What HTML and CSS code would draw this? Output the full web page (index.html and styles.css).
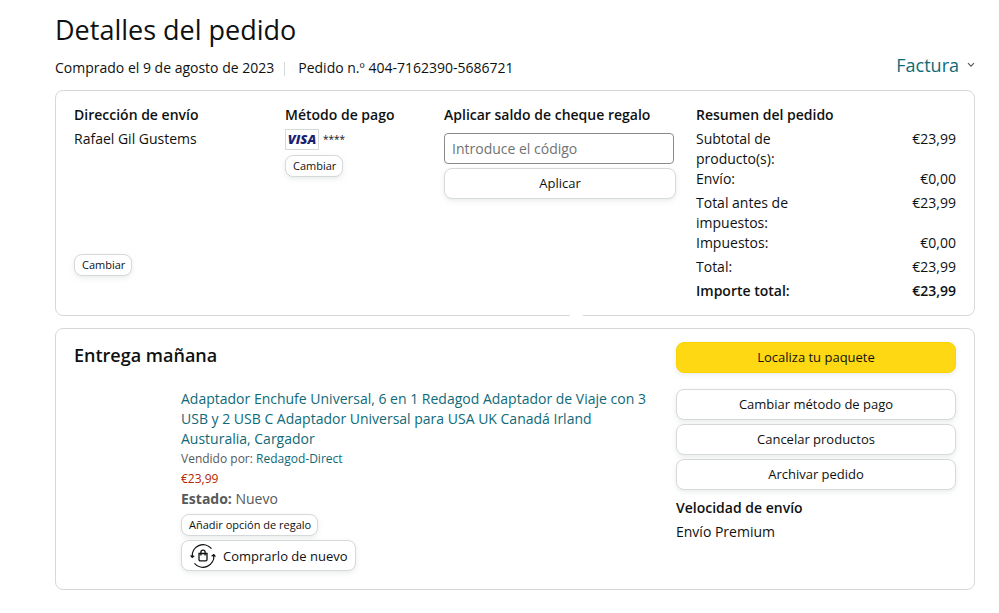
FILE: index.html
```
<!DOCTYPE html>
<html lang="es">
<head>
  <meta charset="UTF-8">
  <meta name="viewport" content="width=device-width, initial-scale=1">
  <title>Detalles del pedido</title>
  <link rel="stylesheet" href="styles.css">
</head>
<body>

<main class="page">
  <h1>Detalles del pedido</h1>
  <div class="order-info">
    <p class="order-meta">
      <span class="order-date">Comprado el 9 de agosto de 2023</span>
      <span class="order-number">Pedido n.º 404-7162390-5686721</span>
    </p>
    <a class="invoice" href="#">Factura
      <svg class="chevron" viewBox="0 0 8 6"><path d="M1 1.2l3 3 3-3" fill="none" stroke="#565959" stroke-width="1.2"/></svg>
    </a>
  </div>

  <!-- Resumen -->
  <section class="card summary">
    <div class="address">
      <h2>Dirección de envío</h2>
      <p>Rafael Gil Gustems</p>
      <button class="btn btn-small" type="button">Cambiar</button>
    </div>

    <div class="payment">
      <h2>Método de pago</h2>
      <p class="payment-card"><span class="visa">VISA</span> <span class="card-digits">****</span></p>
      <button class="btn btn-small" type="button">Cambiar</button>
    </div>

    <form class="gift">
      <h2><label for="code">Aplicar saldo de cheque regalo</label></h2>
      <input class="gift-input" id="code" type="text" placeholder="Introduce el código">
      <button class="btn" type="button">Aplicar</button>
    </form>

    <div class="totals">
      <h2>Resumen del pedido</h2>
      <table>
        <tr><th scope="row">Subtotal de producto(s):</th><td>€23,99</td></tr>
        <tr class="spaced"><th scope="row">Envío:</th><td>€0,00</td></tr>
        <tr><th scope="row">Total antes de impuestos:</th><td>€23,99</td></tr>
        <tr class="spaced"><th scope="row">Impuestos:</th><td>€0,00</td></tr>
        <tr class="spaced"><th scope="row">Total:</th><td>€23,99</td></tr>
        <tr class="grand-total"><th scope="row">Importe total:</th><td>€23,99</td></tr>
      </table>
    </div>
  </section>

  <!-- Envío -->
  <section class="card shipment">
    <div class="delivery">
      <h2 class="delivery-title">Entrega mañana</h2>
      <div class="product">
        <a class="product-title" href="#">Adaptador Enchufe Universal, 6 en 1 Redagod Adaptador de Viaje con 3 USB y 2 USB C Adaptador Universal para USA UK Canadá Irland Austuralia, Cargador</a>
        <p class="seller">Vendido por: <a href="#">Redagod-Direct</a></p>
        <p class="price">€23,99</p>
        <p class="condition"><b>Estado:</b> Nuevo</p>
        <button class="btn btn-small" type="button">Añadir opción de regalo</button>
        <button class="btn btn-again" type="button">
          <svg class="again-icon" viewBox="0 0 26 26" fill="none" stroke="#0f1111" stroke-width="1.3">
            <path d="M2.2 14A11 11 0 0 1 21.5 5.6"/>
            <path d="M23.8 12A11 11 0 0 1 4.5 20.4"/>
            <path d="M.6 12.4l1.6 2 2-1.6M21.6 13.2l2.200-1.600 1.600 2"/>
            <path d="M9 10.500h8v6a1.300 1.300 0 0 1-1.300 1.300h-5.400A1.300 1.300 0 0 1 9 16.500zM10.900 12.500V9.200a2.100 2.100 0 0 1 4.200 0v3.300"/>
          </svg>
          Comprarlo de nuevo
        </button>
      </div>
    </div>

    <div class="actions">
      <button class="btn btn-primary" type="button">Localiza tu paquete</button>
      <button class="btn" type="button">Cambiar método de pago</button>
      <button class="btn" type="button">Cancelar productos</button>
      <button class="btn" type="button">Archivar pedido</button>
      <h2 class="speed-title">Velocidad de envío</h2>
      <p>Envío Premium</p>
    </div>
  </section>
</main>

</body>
</html>
```
FILE: styles.css
```
* {
  box-sizing: border-box;
}
body {
  margin: 0;
  font-family: "Open Sans", "Noto Sans", sans-serif;
  font-size: 14px;
  line-height: 20px;
  color: #0f1111;
  background: #fff;
}
.page {
  padding: 12px 24px 24px 55px;
}
h1, h2, p {
  margin: 0;
}
h1 {
  font-size: 27px;
  font-weight: 400;
  line-height: 36px;
}
h2 {
  font-size: 14px;
  font-weight: 600;
  line-height: 20px;
  margin-bottom: 4px;
}
a {
  color: #0f6a78;
  text-decoration: none;
}
a:hover {
  text-decoration: underline;
}
.order-info {
  display: flex;
  justify-content: space-between;
  align-items: flex-start;
  margin-bottom: 12px;
}
.order-meta {
  display: flex;
  padding-top: 10px;
}
.order-date {
  padding-right: 10px;
}
.order-number {
  position: relative;
  padding-left: 14px;
}
.order-number::before {
  content: "";
  position: absolute;
  left: 0;
  top: 4px;
  height: 14px;
  border-left: 1px solid #d5d9d9;
}
.invoice {
  display: flex;
  align-items: center;
  gap: 8px;
  padding-top: 4px;
  font-size: 18px;
  line-height: 26px;
}
.chevron {
  width: 8px;
  height: 6px;
}
.card {
  border: 1px solid #d5d9d9;
  border-radius: 8px;
  padding: 14px 18px;
}
.card + .card {
  margin-top: 12px;
}

/* Controls */
.btn {
  height: 31px;
  padding: 0 10px 2px;
  border: 1px solid #d5d9d9;
  border-radius: 8px;
  background: #fff;
  box-shadow: 0 2px 5px rgba(213, 217, 217, 0.5);
  font-family: inherit;
  font-size: 13px;
  color: #0f1111;
  text-align: center;
  cursor: pointer;
}
.btn:hover {
  background: #f7fafa;
}
.btn-small {
  height: 22px;
  padding: 0 6px 1px 7px;
  font-size: 11px;
}
.btn-primary {
  border-color: #fcd200;
  background: #ffd814;
}
.btn-primary:hover {
  background: #f7ca00;
}

/* Order summary */
.summary {
  position: relative;
  display: grid;
  grid-template-columns: 211fr 159fr 252fr 260fr;
}
/* break in the bottom border */
.summary::after {
  content: "";
  position: absolute;
  left: 56%;
  bottom: -1px;
  width: 13px;
  height: 1px;
  background: #fff;
}
.address {
  display: flex;
  flex-direction: column;
  align-items: flex-start;
}
.address .btn {
  margin-top: auto;
  margin-bottom: 25px;
}
.payment-card {
  display: flex;
  gap: 4px;
  margin-bottom: 5px;
}
.visa {
  width: 34px;
  height: 21px;
  border: 1px solid #d5d9d9;
  font-size: 13px;
  font-style: italic;
  font-weight: 800;
  line-height: 19px;
  text-align: center;
  color: #1a1f71;
}
.card-digits {
  font-size: 10px;
}
.gift {
  display: flex;
  flex-direction: column;
  gap: 4px;
  padding-right: 20px;
}
.gift-input {
  height: 31px;
  margin-right: 2px;
  padding: 0 7px;
  border: 1px solid #888c8c;
  border-radius: 4px;
  font-family: inherit;
  font-size: 14px;
  color: #0f1111;
}
.gift-input::placeholder {
  color: #6f7373;
}
table {
  width: 100%;
  border-collapse: collapse;
}
th, td {
  padding: 0;
  vertical-align: top;
}
th {
  width: 50%;
  font-weight: 400;
  text-align: left;
}
td {
  text-align: right;
}
.spaced th {
  padding-bottom: 4px;
}
.grand-total th,
.grand-total td {
  font-weight: 600;
}

/* Shipment */
.shipment {
  display: grid;
  grid-template-columns: 1fr 280px;
  padding-top: 13px;
  padding-bottom: 18px;
}
.delivery-title {
  margin-bottom: 21px;
  font-size: 18px;
  line-height: 26px;
}
.product {
  display: flex;
  flex-direction: column;
  align-items: flex-start;
  padding-left: 107px;
  padding-right: 24px;
}
.seller, .price {
  font-size: 12px;
}
.seller, .condition {
  color: #565959;
}
.price {
  color: #b12704;
}
.product .btn-small {
  margin-top: 5px;
}
.btn-again {
  display: flex;
  align-items: center;
  gap: 7px;
  margin-top: 4px;
  padding: 0 7px 0 8px;
}
.again-icon {
  width: 26px;
  height: 26px;
}
.actions {
  display: flex;
  flex-direction: column;
}
.actions .btn {
  margin-bottom: 4px;
}
.actions .btn-primary {
  margin-bottom: 16px;
}
.speed-title {
  margin-top: 4px;
}
```
